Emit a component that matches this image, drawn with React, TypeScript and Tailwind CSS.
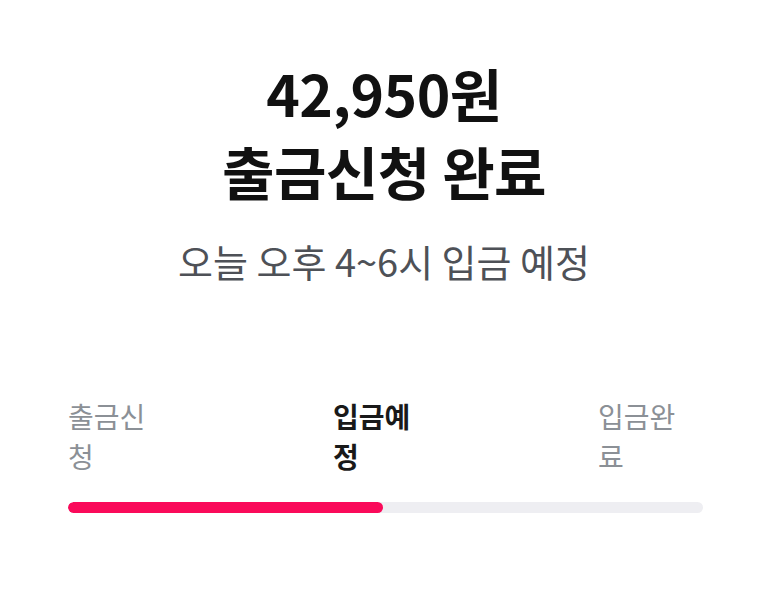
import React from "react";

const steps = [
  { label: "출금신청", active: false },
  { label: "입금예정", active: true },
  { label: "입금완료", active: false },
];

const App = () => {
  return (
    <div
      className="w-[768px] h-[610px] bg-white flex flex-col items-center"
      style={{ fontFamily: "'Noto Sans CJK KR', 'Noto Sans', sans-serif" }}
    >
      <div className="mt-[53px] text-center text-[57px] leading-[78px] font-bold text-[#111111] tracking-[-0.5px]">
        <div>42,950원</div>
        <div>출금신청 완료</div>
      </div>
      <div className="mt-[27px] text-[38px] leading-[50px] text-[#4e5157]">
        오늘 오후 4~6시 입금 예정
      </div>

      <div className="mt-[110px] w-[635px] self-start ml-[68px]">
        <div className="flex justify-between">
          {steps.map((s) => (
            <div
              key={s.label}
              className={
                s.active
                  ? "w-[105px] pr-[15px] break-all text-[28px] leading-[40px] font-bold text-[#191919]"
                  : "w-[105px] pr-[15px] break-all text-[28px] leading-[40px] text-[#8b9096]"
              }
            >
              {s.label}
            </div>
          ))}
        </div>
        <div className="mt-[26px] h-[11px] rounded-full bg-[#eeeef2] overflow-hidden">
          <div className="h-full w-[315px] rounded-full bg-[#fa0a5a]" />
        </div>
      </div>
    </div>
  );
};

export default App;
